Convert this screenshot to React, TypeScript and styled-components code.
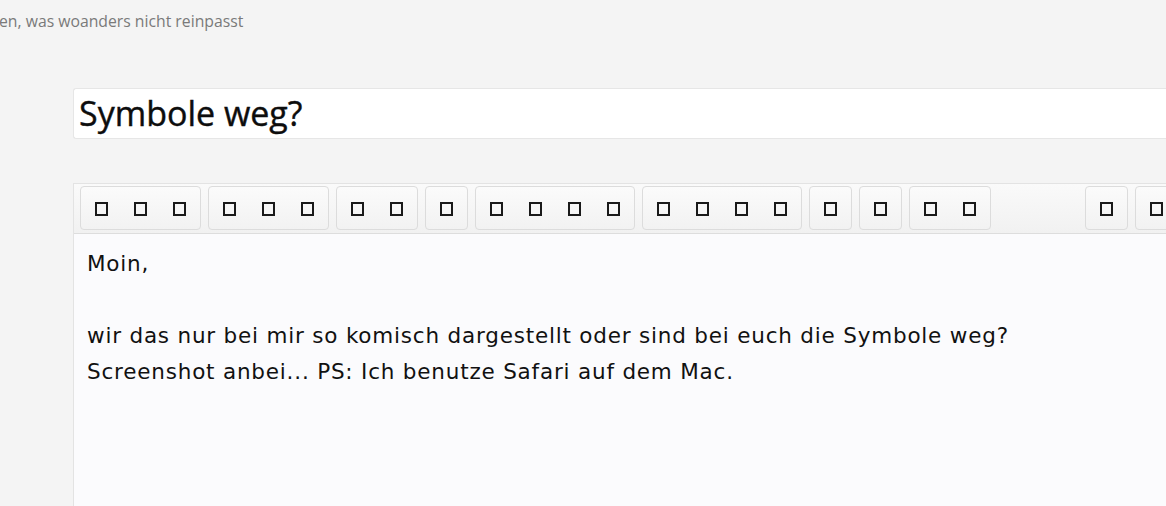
import React from "react";
import styled, { createGlobalStyle } from "styled-components";

const GlobalStyle = createGlobalStyle`
  html, body {
    margin: 0;
    padding: 0;
    background: #f4f4f4;
    overflow: hidden;
  }
  * { box-sizing: border-box; }
`;

const Page = styled.div`
  width: 1166px;
  height: 506px;
  overflow: hidden;
  background: #f4f4f4;
`;

const TopNote = styled.div`
  padding-top: 9px;
  margin-left: -1px;
  height: 32px;
  line-height: 24px;
  font-family: "Open Sans", "Noto Sans", sans-serif;
  font-size: 15.75px;
  color: #7a7a7a;
  white-space: nowrap;
`;

const Main = styled.div`
  padding: 56px 0 0 73px;
  width: 1300px;
`;

const TitleBox = styled.div`
  height: 51px;
  background: #ffffff;
  border: 1px solid #e6e6e6;
  border-right: none;
  border-radius: 3px 0 0 3px;
  padding-left: 5px;
  font-family: "Open Sans", "Noto Sans", sans-serif;
  font-size: 34px;
  line-height: 49px;
  color: #0d0d0d;
  white-space: nowrap;
  -webkit-text-stroke: 0.4px #0d0d0d;
`;

const Editor = styled.div`
  margin-top: 44px;
  border: 1px solid #e3e3e3;
  border-right: none;
  border-bottom: none;
`;

const Toolbar = styled.div`
  display: flex;
  gap: 7px;
  padding: 2px 0 3px 6px;
  background: linear-gradient(#fafafa, #f1f1f1);
  border-bottom: 1px solid #dddddd;
`;

const Group = styled.div`
  display: flex;
  flex: none;
  padding: 1px;
  border: 1px solid #dcdcdc;
  border-radius: 4px;
  background: linear-gradient(#fbfbfb, #f2f2f2);
`;

const Spacer = styled.div`
  flex: 0 0 80px;
`;

const ToolButton = styled.div`
  width: 39px;
  height: 40px;
  display: flex;
  align-items: center;
  justify-content: center;
`;

const Tofu = styled.span`
  display: block;
  width: 13px;
  height: 14px;
  margin: 2px 1px 0 0;
  border: 2px solid #1a1a1a;
`;

const Content = styled.div`
  height: 280px;
  background: #fbfbfd;
  padding: 12px 0 0 13px;
  font-family: "DejaVu Sans", Verdana, sans-serif;
  font-size: 21.5px;
  letter-spacing: 0.8px;
  line-height: 36px;
  color: #111;
  white-space: nowrap;
`;

const Line = styled.div`
  min-height: 36px;
`;

const groups = [3, 3, 2, 1, 4, 4, 1, 1, 2, 0, 1, 1];

export default function App() {
  return (
    <Page>
      <GlobalStyle />
      <TopNote>en, was woanders nicht reinpasst</TopNote>
      <Main>
        <TitleBox>Symbole weg?</TitleBox>
        <Editor>
          <Toolbar>
            {groups.map((n, i) =>
              n === 0 ? (
                <Spacer key={i} />
              ) : (
                <Group key={i}>
                  {Array.from({ length: n }).map((_, j) => (
                    <ToolButton key={j}>
                      <Tofu />
                    </ToolButton>
                  ))}
                </Group>
              )
            )}
          </Toolbar>
          <Content>
            <Line>Moin,</Line>
            <Line />
            <Line>wir das nur bei mir so komisch dargestellt oder sind bei euch die Symbole weg?</Line>
            <Line>Screenshot anbei... PS: Ich benutze Safari auf dem Mac.</Line>
          </Content>
        </Editor>
      </Main>
    </Page>
  );
}
